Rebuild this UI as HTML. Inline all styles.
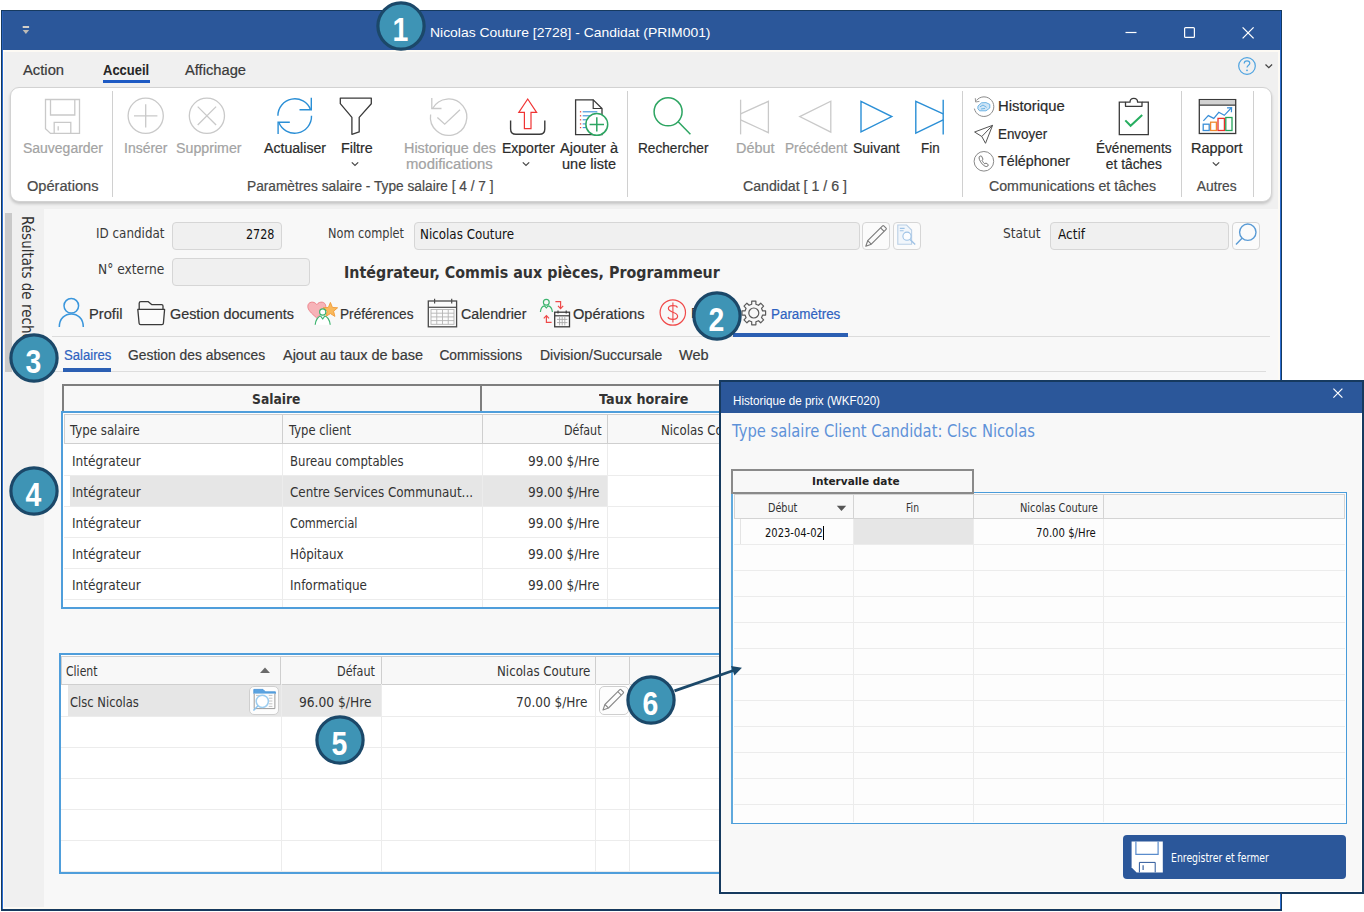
<!DOCTYPE html>
<html lang="fr"><head><meta charset="utf-8"><title>Nicolas Couture [2728] - Candidat (PRIM001)</title>
<style>
html,body{margin:0;padding:0;background:#fff;}
body{width:1364px;height:912px;position:relative;overflow:hidden;font-family:"Liberation Sans",sans-serif;}
.b{position:absolute;display:block;}
.t{position:absolute;white-space:nowrap;line-height:20px;height:20px;transform-origin:0 50%;display:block;}
</style></head>
<body>
<div class="b" style="left:1px;top:10px;width:1281px;height:901px;background:#163a5f;"></div>
<div class="b" style="left:2px;top:11px;width:1279px;height:898px;background:#2a6cd0;"></div>
<div class="b" style="left:3px;top:11px;width:1277px;height:898px;background:#fdfaf4;"></div>
<div class="b" style="left:4px;top:52px;width:1274px;height:855px;background:#f8f8f8;"></div>
<div class="b" style="left:2px;top:10.6px;width:1279px;height:39.699999999999996px;background:#2b579a;"></div>
<div class="b" style="left:2px;top:11px;width:1px;height:39px;background:#2a62bd;"></div>
<div class="b" style="left:1280px;top:11px;width:1px;height:39px;background:#1d5cc0;"></div>
<span class="t" style="left:429.70px;top:22.70px;font-size:13.5px;color:#fff;transform:scaleX(1.0298);">Nicolas Couture [2728] - Candidat (PRIM001)</span>
<svg class="b" style="left:21px;top:24px;" width="10" height="12" viewBox="0 0 10 12" fill="none"><rect x="1.7" y="2" width="6.4" height="2" fill="#d4d0c8"/><path d="M1.7 5.9 L8.1 5.9 L4.9 10 Z" fill="#bfbcb6"/></svg>
<svg class="b" style="left:1120px;top:20px;" width="140" height="24" viewBox="0 0 140 24" fill="none"><path d="M5.5 12.5 H16.5" stroke="#fff" stroke-width="1.2"/><rect x="64.6" y="7.6" width="9.8" height="9.8" rx="1" stroke="#fff" stroke-width="1.2"/><path d="M122.6 7.4 L133.6 18.4 M133.6 7.4 L122.6 18.4" stroke="#fff" stroke-width="1.3"/></svg>
<div class="b" style="left:4px;top:51.6px;width:1274px;height:35.4px;background:#f0f0f0;"></div>
<span class="t" style="left:22.70px;top:60.60px;font-size:13.8px;color:#3a3a3a;transform:scaleX(1.0714);-webkit-text-stroke:0.2px;">Action</span>
<span class="t" style="left:102.60px;top:60.60px;font-size:13.8px;color:#262626;font-weight:700;transform:scaleX(0.9414);">Accueil</span>
<span class="t" style="left:185.00px;top:60.60px;font-size:13.8px;color:#3a3a3a;transform:scaleX(1.0649);-webkit-text-stroke:0.2px;">Affichage</span>
<div class="b" style="left:103px;top:80px;width:47px;height:3px;background:#1e5ac4;"></div>
<svg class="b" style="left:1236px;top:55px;" width="40" height="22" viewBox="0 0 40 22" fill="none"><circle cx="11" cy="11" r="8.3" stroke="#4ea3e0" stroke-width="1.2"/><path d="M8.2 8.6 C8.2 6.6 9.6 5.8 11 5.8 C12.6 5.8 13.8 6.8 13.8 8.2 C13.8 10.2 11 10.2 11 12.6" stroke="#4ea3e0" stroke-width="1.2"/><circle cx="11" cy="15.3" r="0.9" fill="#4ea3e0"/><path d="M29.5 9.5 L32.8 12.6 L36.1 9.5" stroke="#444" stroke-width="1.3"/></svg>
<div class="b" style="left:4px;top:87px;width:1274px;height:122px;background:#f0f0f0;"></div>
<div class="b" style="left:10px;top:87px;width:1262px;height:115px;background:#ffffff;border:1px solid #d2d2d2;box-sizing:border-box;border-radius:9px;box-shadow:0 2px 3px rgba(0,0,0,0.18);"></div>
<div class="b" style="left:112px;top:91px;width:1px;height:106px;background:#d0d0d0;"></div>
<div class="b" style="left:627px;top:91px;width:1px;height:106px;background:#d0d0d0;"></div>
<div class="b" style="left:961.5px;top:91px;width:1.0px;height:106px;background:#d0d0d0;"></div>
<div class="b" style="left:1180.5px;top:91px;width:1.0px;height:106px;background:#d0d0d0;"></div>
<div class="b" style="left:1253px;top:91px;width:1px;height:106px;background:#d0d0d0;"></div>
<span class="t" style="left:23.00px;top:139.10px;font-size:13.8px;color:#a3a3a3;transform:scaleX(1.0125);-webkit-text-stroke:0.2px;">Sauvegarder</span>
<span class="t" style="left:27.00px;top:177.10px;font-size:13.8px;color:#4a4a4a;transform:scaleX(1.0593);-webkit-text-stroke:0.2px;">Opérations</span>
<span class="t" style="left:124.00px;top:139.10px;font-size:13.8px;color:#a3a3a3;transform:scaleX(1.0127);-webkit-text-stroke:0.2px;">Insérer</span>
<span class="t" style="left:175.70px;top:139.10px;font-size:13.8px;color:#a3a3a3;transform:scaleX(1.0305);-webkit-text-stroke:0.2px;">Supprimer</span>
<span class="t" style="left:264.00px;top:139.10px;font-size:13.8px;color:#2b2b2b;transform:scaleX(1.0235);-webkit-text-stroke:0.2px;">Actualiser</span>
<span class="t" style="left:340.60px;top:139.10px;font-size:13.8px;color:#2b2b2b;transform:scaleX(1.0368);-webkit-text-stroke:0.2px;">Filtre</span>
<span class="t" style="left:403.50px;top:139.10px;font-size:13.8px;color:#a3a3a3;transform:scaleX(1.0419);-webkit-text-stroke:0.2px;">Historique des</span>
<span class="t" style="left:405.80px;top:154.90px;font-size:13.8px;color:#a3a3a3;transform:scaleX(1.0766);-webkit-text-stroke:0.2px;">modifications</span>
<span class="t" style="left:501.60px;top:139.10px;font-size:13.8px;color:#2b2b2b;transform:scaleX(1.0143);-webkit-text-stroke:0.2px;">Exporter</span>
<span class="t" style="left:560.00px;top:139.10px;font-size:13.8px;color:#2b2b2b;transform:scaleX(1.0501);-webkit-text-stroke:0.2px;">Ajouter à</span>
<span class="t" style="left:562.00px;top:154.90px;font-size:13.8px;color:#2b2b2b;transform:scaleX(1.0508);-webkit-text-stroke:0.2px;">une liste</span>
<span class="t" style="left:247.00px;top:177.10px;font-size:13.8px;color:#4a4a4a;transform:scaleX(0.9935);-webkit-text-stroke:0.2px;">Paramètres salaire - Type salaire [ 4 / 7 ]</span>
<span class="t" style="left:638.00px;top:139.10px;font-size:13.8px;color:#2b2b2b;transform:scaleX(0.9884);-webkit-text-stroke:0.2px;">Rechercher</span>
<span class="t" style="left:736.00px;top:139.10px;font-size:13.8px;color:#a3a3a3;transform:scaleX(1.0454);-webkit-text-stroke:0.2px;">Début</span>
<span class="t" style="left:784.50px;top:139.10px;font-size:13.8px;color:#a3a3a3;transform:scaleX(0.9904);-webkit-text-stroke:0.2px;">Précédent</span>
<span class="t" style="left:853.00px;top:139.10px;font-size:13.8px;color:#2b2b2b;transform:scaleX(1.0145);-webkit-text-stroke:0.2px;">Suivant</span>
<span class="t" style="left:920.90px;top:139.10px;font-size:13.8px;color:#2b2b2b;transform:scaleX(0.9702);-webkit-text-stroke:0.2px;">Fin</span>
<span class="t" style="left:743.40px;top:177.10px;font-size:13.8px;color:#4a4a4a;transform:scaleX(1.0262);-webkit-text-stroke:0.2px;">Candidat [ 1 / 6 ]</span>
<span class="t" style="left:997.90px;top:96.60px;font-size:13.8px;color:#2b2b2b;transform:scaleX(1.0753);-webkit-text-stroke:0.2px;">Historique</span>
<span class="t" style="left:997.90px;top:124.60px;font-size:13.8px;color:#2b2b2b;transform:scaleX(0.9699);-webkit-text-stroke:0.2px;">Envoyer</span>
<span class="t" style="left:997.90px;top:152.40px;font-size:13.8px;color:#2b2b2b;transform:scaleX(1.0328);-webkit-text-stroke:0.2px;">Téléphoner</span>
<span class="t" style="left:1096.30px;top:139.10px;font-size:13.8px;color:#2b2b2b;transform:scaleX(0.9843);-webkit-text-stroke:0.2px;">Événements</span>
<span class="t" style="left:1105.80px;top:154.90px;font-size:13.8px;color:#2b2b2b;-webkit-text-stroke:0.2px;">et tâches</span>
<span class="t" style="left:988.60px;top:177.10px;font-size:13.8px;color:#4a4a4a;transform:scaleX(1.0272);-webkit-text-stroke:0.2px;">Communications et tâches</span>
<span class="t" style="left:1191.30px;top:139.10px;font-size:13.8px;color:#2b2b2b;transform:scaleX(1.0511);-webkit-text-stroke:0.2px;">Rapport</span>
<span class="t" style="left:1196.80px;top:177.10px;font-size:13.8px;color:#4a4a4a;-webkit-text-stroke:0.2px;">Autres</span>
<svg class="b" style="left:350px;top:160px;" width="10" height="8" viewBox="0 0 10 8" fill="none"><path d="M1.8 2.4 L5 5.4 L8.2 2.4" stroke="#4a4a4a" stroke-width="1.3"/></svg>
<svg class="b" style="left:521px;top:160px;" width="10" height="8" viewBox="0 0 10 8" fill="none"><path d="M1.8 2.4 L5 5.4 L8.2 2.4" stroke="#4a4a4a" stroke-width="1.3"/></svg>
<svg class="b" style="left:1211px;top:160px;" width="10" height="8" viewBox="0 0 10 8" fill="none"><path d="M1.8 2.4 L5 5.4 L8.2 2.4" stroke="#4a4a4a" stroke-width="1.3"/></svg>
<svg class="b" style="left:0;top:90px" width="1280" height="90" viewBox="0 90 1280 90" fill="none"><g stroke="#c9c9c9" stroke-width="1.3"><path d="M45.5 99.5 H79.5 V133.4 H50.5 L45.5 128.6 Z"/><path d="M50.5 99.5 V115 H74.8 V99.5"/><path d="M54.2 133.4 V122.3 H70.8 V133.4"/><path d="M58.2 126.3 V130.6"/></g><g stroke="#c9c9c9" stroke-width="1.3"><circle cx="145.7" cy="115.8" r="17.6"/><path d="M134 115.8 H157.4 M145.7 104.2 V127.6"/><circle cx="206.9" cy="115.8" r="17.6"/><path d="M197.7 106.6 L216.1 125 M216.1 106.6 L197.7 125"/></g><g stroke="#2b8fd6" stroke-width="1.4"><path d="M277.9 115.8 A16.9 16.9 0 0 1 310.6 109.7"/><path d="M311.3 97.7 V109.7 H299.5"/><path d="M311.5 115.8 A16.9 16.9 0 0 1 278.8 122.3"/><path d="M278.1 133.9 V122.3 H289.8"/></g><path d="M340.3 98.1 H371.3 V103.7 L359.2 117.4 V131.9 L351.9 134.3 V117.4 L340.3 103.7 Z" stroke="#3a3a3a" stroke-width="1.3" stroke-linejoin="round"/><g stroke="#c9c9c9" stroke-width="1.3"><path d="M432.6 108.5 A18.2 18.2 0 1 1 430.6 114.5"/><path d="M431.8 98 V108.5 H441.5"/><path d="M437.4 117.4 L444.7 124.2 L460 109.7"/></g><path d="M510.6 120.6 V129 Q510.6 134.3 516 134.3 H539.4 Q544.8 134.3 544.8 129 V120.6" stroke="#3a3a3a" stroke-width="1.4"/><path d="M527.7 99 L536.6 112.3 H531 V128.6 H524.4 V112.3 H518.8 Z" stroke="#f03434" stroke-width="1.2" stroke-linejoin="miter"/><path d="M575.6 99.8 H593.2 L602 108.5 V134.7 H575.6 Z" stroke="#3a3a3a" stroke-width="1.3" fill="#fff"/><path d="M593.2 99.8 V108.5 H602" stroke="#3a3a3a" stroke-width="1.2"/><path d="M582.7 111.8 H597.3" stroke="#3a8fd8" stroke-width="1.1"/><rect x="579.9" y="111.2" width="1.3" height="1.2" fill="#e8403a"/><path d="M582.7 115.8 H597.3" stroke="#3a8fd8" stroke-width="1.1"/><rect x="579.9" y="115.2" width="1.3" height="1.2" fill="#e8403a"/><path d="M582.7 119.8 H597.3" stroke="#3a8fd8" stroke-width="1.1"/><rect x="579.9" y="119.2" width="1.3" height="1.2" fill="#e8403a"/><path d="M582.7 123.9 H597.3" stroke="#3a8fd8" stroke-width="1.1"/><rect x="579.9" y="123.30000000000001" width="1.3" height="1.2" fill="#e8403a"/><path d="M582.7 127.6 H597.3" stroke="#3a8fd8" stroke-width="1.1"/><rect x="579.9" y="127.0" width="1.3" height="1.2" fill="#e8403a"/><circle cx="596.8" cy="124.4" r="10.9" fill="#fff" stroke="#2da562" stroke-width="1.5"/><path d="M589.6 124.4 H604 M596.8 117.2 V131.6" stroke="#2da562" stroke-width="1.5"/><g stroke="#2da562" stroke-width="1.5"><circle cx="668.1" cy="111.8" r="14"/><path d="M678.2 121.8 L690.4 134.3"/></g><g stroke="#c9c9c9" stroke-width="1.3" stroke-linejoin="miter"><path d="M740.6 99.7 V134.4"/><path d="M740.6 113.9 L768.4 101.3 V132.7 L740.6 119.8"/><path d="M799.7 116.6 L830.8 101.2 V132.2 Z"/></g><g stroke="#2b8fd6" stroke-width="1.4" stroke-linejoin="miter"><path d="M861 101.3 L891.8 116.6 L861 131.9 Z"/><path d="M943.2 99.7 V134.4"/><path d="M943.2 113.9 L915.8 101.3 V133.2 L943.2 119.8"/></g><g stroke="#8a8a8a" stroke-width="1"><path d="M976.3 100.6 A9.8 9.8 0 1 1 974.4 108.6"/><path d="M975.3 98.2 L975.6 102 L979.4 101.4" stroke-width="0.9"/></g><path d="M978 106 L981.5 102.8 L986 102.6 L989.8 104.4 L989.8 108 L986 110.8 L979.6 110.8 L977.8 108.6 Z" fill="#cfe5f6" stroke="#62aee2" stroke-width="0.9"/><path d="M980 106.8 L983 105 L986.6 107.4 M981 109 L985 108.4" stroke="#62aee2" stroke-width="0.9"/><path d="M992.6 125.3 L974.6 132 L981.8 136.5 L985.5 143.3 Z M992.6 125.3 L981.8 136.5" stroke="#555" stroke-width="1" stroke-linejoin="round"/><circle cx="983.9" cy="161.3" r="9.8" stroke="#8a8a8a" stroke-width="1"/><path d="M980.2 156 C978.6 156.6 978.6 158.6 980.6 161.8 C982.6 165 985.6 167.4 987.6 166.2 L988.4 164.8 L986 163 L984.8 163.8 C983.8 163.2 982.6 161.6 982 160.2 L983 159.2 L981.6 156.2 Z" stroke="#666" stroke-width="0.9" stroke-linejoin="round"/><path d="M1125.5 102.2 H1119.3 V134.6 H1148.3 V102.2 H1142" stroke="#3a3a3a" stroke-width="1.3"/><path d="M1125.5 106.3 V102.2 H1130 C1130 97 1137.6 97 1137.6 102.2 H1142 V106.3 Z" stroke="#3a3a3a" stroke-width="1.3" stroke-linejoin="round"/><path d="M1125.3 120.4 L1130.6 125.8 L1142.2 115" stroke="#27ae60" stroke-width="2"/><rect x="1199.3" y="99.6" width="36.4" height="33.9" stroke="#3a3a3a" stroke-width="1.3" fill="#fff"/><rect x="1200" y="100.3" width="35" height="4.4" fill="#d2d2d2"/><path d="M1199.3 105.2 H1235.7" stroke="#3a3a3a" stroke-width="1.2"/><rect x="1203.2" y="124.2" width="6" height="6.3" stroke="#3a8fd8" stroke-width="1.3"/><rect x="1210.6" y="122.2" width="5.8" height="8.3" stroke="#f08a30" stroke-width="1.3"/><rect x="1218" y="118.4" width="6.4" height="12.1" stroke="#e8302a" stroke-width="1.3"/><rect x="1225.8" y="117.5" width="6.2" height="13" stroke="#22a35a" stroke-width="1.3"/><path d="M1203.4 120.8 L1208.3 115.6 L1213.8 118.4 L1218.8 112.3 L1224.3 115.3 L1231.2 108" stroke="#3a8fd8" stroke-width="1.2"/><path d="M1227 107.8 L1231.6 107.6 L1231.4 112.2" stroke="#3a8fd8" stroke-width="1.2"/></svg>
<div class="b" style="left:4px;top:209px;width:40px;height:698px;background:#f0f0f0;"></div>
<div class="b" style="left:5px;top:212.5px;width:7px;height:159.5px;background:#c9c9c9;"></div>
<span class="t" style="left:26.5px;top:215.6px;font-size:15.4px;color:#333;font-family:'DejaVu Sans','Liberation Sans',sans-serif;transform-origin:0 0;transform:rotate(90deg) translate(0,-50%) scaleX(0.879);height:20px;line-height:20px;">Résultats de recherche</span>
<div class="b" style="left:4px;top:337px;width:40px;height:570px;background:#f0f0f0;"></div>
<div class="b" style="left:5px;top:337px;width:7px;height:35px;background:#c9c9c9;"></div>
<span class="t" style="left:96.00px;top:223.20px;font-size:14px;color:#3a3a3a;font-family:'DejaVu Sans','Liberation Sans',sans-serif;transform:scaleX(0.8536);">ID candidat</span>
<div class="b" style="left:172px;top:222px;width:110px;height:28px;background:#f0f0f0;border:1px solid #d6d6d6;box-sizing:border-box;border-radius:4px;"></div>
<span class="t" style="left:245.50px;top:224.20px;font-size:14px;color:#111;font-family:'DejaVu Sans','Liberation Sans',sans-serif;transform:scaleX(0.7996);">2728</span>
<span class="t" style="left:97.70px;top:259.40px;font-size:14px;color:#3a3a3a;font-family:'DejaVu Sans','Liberation Sans',sans-serif;transform:scaleX(0.8760);">N° externe</span>
<div class="b" style="left:172px;top:258px;width:138px;height:28px;background:#f0f0f0;border:1px solid #d6d6d6;box-sizing:border-box;border-radius:4px;"></div>
<span class="t" style="left:328.20px;top:223.20px;font-size:14px;color:#3a3a3a;font-family:'DejaVu Sans','Liberation Sans',sans-serif;transform:scaleX(0.8093);">Nom complet</span>
<div class="b" style="left:414px;top:222px;width:446px;height:28px;background:#f0f0f0;border:1px solid #d6d6d6;box-sizing:border-box;border-radius:4px;"></div>
<span class="t" style="left:420.00px;top:224.20px;font-size:14px;color:#111;font-family:'DejaVu Sans','Liberation Sans',sans-serif;transform:scaleX(0.8508);">Nicolas Couture</span>
<div class="b" style="left:862px;top:222px;width:28px;height:28px;background:#fbfbfb;border:1px solid #d6d6d6;box-sizing:border-box;border-radius:4px;"></div>
<div class="b" style="left:893px;top:222px;width:28px;height:28px;background:#fbfbfb;border:1px solid #d6d6d6;box-sizing:border-box;border-radius:4px;"></div>
<span class="t" style="left:1003.00px;top:223.40px;font-size:14px;color:#3a3a3a;font-family:'DejaVu Sans','Liberation Sans',sans-serif;transform:scaleX(0.8759);">Statut</span>
<div class="b" style="left:1050px;top:222px;width:179px;height:28px;background:#f0f0f0;border:1px solid #d6d6d6;box-sizing:border-box;border-radius:4px;"></div>
<span class="t" style="left:1058.00px;top:224.20px;font-size:14px;color:#111;font-family:'DejaVu Sans','Liberation Sans',sans-serif;transform:scaleX(0.8614);">Actif</span>
<div class="b" style="left:1232px;top:222px;width:28px;height:28px;background:#fbfbfb;border:1px solid #d6d6d6;box-sizing:border-box;border-radius:4px;"></div>
<span class="t" style="left:344.00px;top:263.40px;font-size:15px;color:#333;font-family:'DejaVu Sans','Liberation Sans',sans-serif;font-weight:700;transform:scaleX(0.9514);">Intégrateur, Commis aux pièces, Programmeur</span>
<span class="t" style="left:89.20px;top:304.90px;font-size:13.8px;color:#333;transform:scaleX(1.0624);-webkit-text-stroke:0.2px;">Profil</span>
<span class="t" style="left:169.50px;top:304.90px;font-size:13.8px;color:#333;transform:scaleX(1.0423);-webkit-text-stroke:0.2px;">Gestion documents</span>
<span class="t" style="left:340.00px;top:304.90px;font-size:13.8px;color:#333;transform:scaleX(0.9880);-webkit-text-stroke:0.2px;">Préférences</span>
<span class="t" style="left:460.50px;top:304.90px;font-size:13.8px;color:#333;transform:scaleX(1.0290);-webkit-text-stroke:0.2px;">Calendrier</span>
<span class="t" style="left:573.00px;top:304.90px;font-size:13.8px;color:#333;transform:scaleX(1.0593);-webkit-text-stroke:0.2px;">Opérations</span>
<span class="t" style="left:770.50px;top:304.90px;font-size:13.8px;color:#2e62c0;transform:scaleX(0.9718);-webkit-text-stroke:0.2px;">Paramètres</span>
<div class="b" style="left:52px;top:336px;width:1218px;height:1px;background:#dcdcdc;"></div>
<div class="b" style="left:732.5px;top:333px;width:115.10000000000002px;height:3.5px;background:#2b5fb3;"></div>
<span class="t" style="left:63.60px;top:345.60px;font-size:13.8px;color:#2e62c0;transform:scaleX(0.9507);-webkit-text-stroke:0.2px;">Salaires</span>
<span class="t" style="left:128.40px;top:345.60px;font-size:13.8px;color:#3a3a3a;transform:scaleX(1.0042);-webkit-text-stroke:0.2px;">Gestion des absences</span>
<span class="t" style="left:282.50px;top:345.60px;font-size:13.8px;color:#3a3a3a;transform:scaleX(1.0489);-webkit-text-stroke:0.2px;">Ajout au taux de base</span>
<span class="t" style="left:439.40px;top:345.60px;font-size:13.8px;color:#3a3a3a;-webkit-text-stroke:0.2px;">Commissions</span>
<span class="t" style="left:539.70px;top:345.60px;font-size:13.8px;color:#3a3a3a;transform:scaleX(1.0159);-webkit-text-stroke:0.2px;">Division/Succursale</span>
<span class="t" style="left:679.00px;top:345.60px;font-size:13.8px;color:#3a3a3a;transform:scaleX(1.0524);-webkit-text-stroke:0.2px;">Web</span>
<div class="b" style="left:52px;top:370.5px;width:1214px;height:1.5px;background:#dddddd;"></div>
<div class="b" style="left:63px;top:368px;width:48px;height:3.5px;background:#2b5fb3;"></div>
<svg class="b" style="left:50px;top:295px" width="730" height="36" viewBox="50 295 730 36" fill="none"><g stroke="#3a96dc" stroke-width="1.5"><circle cx="71.3" cy="305.8" r="7.3"/><path d="M59.3 327 C59.3 309.5 83.3 309.5 83.3 327"/></g><g stroke="#3a3a3a" stroke-width="1.3" stroke-linejoin="round"><path d="M139.2 309.4 V303.2 Q139.2 301.6 140.8 301.6 H148 L151.6 304.6 H161.6 Q163 304.6 163 306 V309.4"/><path d="M137.8 309.4 H164.6 L163.4 323.2 Q163.3 324.6 161.9 324.6 H140.6 Q139.2 324.6 139.1 323.2 Z" fill="#fbfbfb"/></g><path d="M316.6 317.8 C311 313 307.8 309.8 307.8 306.4 C307.8 301.6 314 300.6 316.8 304.6 C319.6 300.6 325.8 301.6 325.8 306.4 C325.8 309.8 322.4 313 316.6 317.8 Z" fill="#f7b3b8" stroke="#ec8088" stroke-width="0.9"/><path d="M330.4 302.4 L332.4 307.4 L337.6 307.8 L333.6 311.2 L334.9 316.4 L330.4 313.6 L325.9 316.4 L327.2 311.2 L323.2 307.8 L328.4 307.4 Z" fill="#f9b95c" stroke="#f09a36" stroke-width="0.9"/><circle cx="322.7" cy="312" r="3.1" fill="#fff" stroke="#3cb46e" stroke-width="1.2"/><path d="M315.2 324.8 C315.6 319.6 318.4 316.4 320.6 316 L322.7 319 L324.8 316 C327 316.4 329.8 319.6 330.2 324.8" fill="#fff" stroke="#3cb46e" stroke-width="1.2" stroke-linejoin="round"/><rect x="428.3" y="301" width="28.3" height="25.8" fill="#fcfcfc" stroke="#4a4a4a" stroke-width="1.3"/><path d="M428.3 307.3 H456.6" stroke="#4a4a4a" stroke-width="1.2"/><path d="M434.6 298.8 V303.5 M451.7 298.8 V303.5" stroke="#4a4a4a" stroke-width="1.2"/><g stroke="#b4b4b4" stroke-width="0.9"><rect x="431" y="309.5" width="23" height="14.8"/><path d="M431 313.2 H454 M431 316.9 H454 M431 320.6 H454 M436.75 309.5 V324.3 M442.5 309.5 V324.3 M448.25 309.5 V324.3"/></g><circle cx="546.3" cy="302.2" r="2.9" stroke="#3cb46e" stroke-width="1.2"/><path d="M540.4 312 C540.8 307.8 543 306 544.6 305.8 L546.3 308 L548 305.8 C549.6 306 552 307.8 552.4 312" stroke="#3cb46e" stroke-width="1.2" stroke-linejoin="round"/><g stroke="#ee4a4a" stroke-width="1.2"><path d="M555.4 301.6 H560.6 V308"/><path d="M558 305.8 L560.6 308.6 L563.2 305.8"/><path d="M551.6 322.4 H546.4 V316"/><path d="M543.8 318.4 L546.4 315.6 L549 318.4"/></g><rect x="554.7" y="312.2" width="14.8" height="14.6" fill="#fcfcfc" stroke="#3a3a3a" stroke-width="1.3"/><path d="M554.7 315.8 H569.5" stroke="#3a3a3a" stroke-width="1.2"/><path d="M558 310.6 V313.4 M566.2 310.6 V313.4" stroke="#3a3a3a" stroke-width="1.1"/><path d="M557 319.4 H567.4 M557 322.6 H567.4 M559.6 317 V325.4 M562.2 317 V325.4 M564.8 317 V325.4" stroke="#a8a8a8" stroke-width="0.9"/><circle cx="672.8" cy="312.5" r="12.7" stroke="#f04a4a" stroke-width="1.2"/><path d="M677.4 307.6 C676.6 305.2 668.4 304.6 668.4 308.6 C668.4 312.8 677.6 311.6 677.6 316.2 C677.6 320.4 668.8 320 668 317" stroke="#f04a4a" stroke-width="1.2"/><path d="M672.9 302.6 V322.6" stroke="#f04a4a" stroke-width="1.1"/><path d="M765.6 310.9 L765.6 315.1 L762.6 315.1 L761.5 317.7 L763.6 319.9 L760.7 322.8 L758.5 320.7 L755.9 321.8 L755.9 324.8 L751.7 324.8 L751.7 321.8 L749.1 320.7 L746.9 322.8 L744.0 319.9 L746.1 317.7 L745.0 315.1 L742.0 315.1 L742.0 310.9 L745.0 310.9 L746.1 308.3 L744.0 306.1 L746.9 303.2 L749.1 305.3 L751.7 304.2 L751.7 301.2 L755.9 301.2 L755.9 304.2 L758.5 305.3 L760.7 303.2 L763.6 306.1 L761.5 308.3 L762.6 310.9 Z" stroke="#5a5a5a" stroke-width="1.2" stroke-linejoin="round"/><circle cx="753.8" cy="313" r="5" stroke="#5a5a5a" stroke-width="1.2"/></svg>
<span class="t" style="left:690.50px;top:304.20px;font-size:13.8px;color:#333;transform:scaleX(0.9231);">Paie</span>
<div class="b" style="left:62px;top:384px;width:420px;height:29px;background:#f8f8f8;border:2px solid #7e7e7e;box-sizing:border-box;"></div>
<div class="b" style="left:480px;top:384px;width:420px;height:29px;background:#f8f8f8;border:2px solid #7e7e7e;box-sizing:border-box;"></div>
<span class="t" style="left:251.50px;top:389.40px;font-size:14.5px;color:#333;font-family:'DejaVu Sans','Liberation Sans',sans-serif;font-weight:700;transform:scaleX(0.8516);">Salaire</span>
<span class="t" style="left:598.50px;top:389.40px;font-size:14.5px;color:#333;font-family:'DejaVu Sans','Liberation Sans',sans-serif;font-weight:700;transform:scaleX(0.8799);">Taux horaire</span>
<div class="b" style="left:61px;top:411px;width:839px;height:198px;background:#ffffff;border:2px solid #4f9edb;box-sizing:border-box;"></div>
<div class="b" style="left:64px;top:414px;width:219px;height:30px;background:#f8f8f8;border:1px solid #cfcfcf;box-sizing:border-box;"></div>
<div class="b" style="left:282px;top:414px;width:201px;height:30px;background:#f8f8f8;border:1px solid #cfcfcf;box-sizing:border-box;"></div>
<div class="b" style="left:482px;top:414px;width:126px;height:30px;background:#f8f8f8;border:1px solid #cfcfcf;box-sizing:border-box;"></div>
<div class="b" style="left:607px;top:414px;width:193px;height:30px;background:#f8f8f8;border:1px solid #cfcfcf;box-sizing:border-box;"></div>
<span class="t" style="left:69.80px;top:420.00px;font-size:14px;color:#333;font-family:'DejaVu Sans','Liberation Sans',sans-serif;transform:scaleX(0.8407);">Type salaire</span>
<span class="t" style="left:289.00px;top:420.00px;font-size:14px;color:#333;font-family:'DejaVu Sans','Liberation Sans',sans-serif;transform:scaleX(0.8260);">Type client</span>
<span class="t" style="left:563.50px;top:420.00px;font-size:14px;color:#333;font-family:'DejaVu Sans','Liberation Sans',sans-serif;transform:scaleX(0.7934);">Défaut</span>
<span class="t" style="left:661.00px;top:420.00px;font-size:14px;color:#333;font-family:'DejaVu Sans','Liberation Sans',sans-serif;transform:scaleX(0.8417);">Nicolas Couture</span>
<div class="b" style="left:70px;top:475px;width:537px;height:30.600000000000023px;background:#e6e6e6;"></div>
<div class="b" style="left:64px;top:475px;width:836px;height:1px;background:#ececec;"></div>
<div class="b" style="left:64px;top:506px;width:836px;height:1px;background:#ececec;"></div>
<div class="b" style="left:64px;top:537px;width:836px;height:1px;background:#ececec;"></div>
<div class="b" style="left:64px;top:568px;width:836px;height:1px;background:#ececec;"></div>
<div class="b" style="left:64px;top:599px;width:836px;height:1px;background:#ececec;"></div>
<div class="b" style="left:282px;top:444px;width:1px;height:163px;background:#ececec;"></div>
<div class="b" style="left:482px;top:444px;width:1px;height:163px;background:#ececec;"></div>
<div class="b" style="left:607px;top:444px;width:1px;height:163px;background:#ececec;"></div>
<span class="t" style="left:72.20px;top:451.10px;font-size:14px;color:#333;font-family:'DejaVu Sans','Liberation Sans',sans-serif;transform:scaleX(0.8702);">Intégrateur</span>
<span class="t" style="left:289.50px;top:451.10px;font-size:14px;color:#333;font-family:'DejaVu Sans','Liberation Sans',sans-serif;transform:scaleX(0.8347);">Bureau comptables</span>
<span class="t" style="left:527.50px;top:451.10px;font-size:14px;color:#333;font-family:'DejaVu Sans','Liberation Sans',sans-serif;transform:scaleX(0.8640);">99.00 $/Hre</span>
<span class="t" style="left:72.20px;top:482.10px;font-size:14px;color:#333;font-family:'DejaVu Sans','Liberation Sans',sans-serif;transform:scaleX(0.8702);">Intégrateur</span>
<span class="t" style="left:289.50px;top:482.10px;font-size:14px;color:#333;font-family:'DejaVu Sans','Liberation Sans',sans-serif;transform:scaleX(0.8535);">Centre Services Communaut...</span>
<span class="t" style="left:527.50px;top:482.10px;font-size:14px;color:#333;font-family:'DejaVu Sans','Liberation Sans',sans-serif;transform:scaleX(0.8640);">99.00 $/Hre</span>
<span class="t" style="left:72.20px;top:513.10px;font-size:14px;color:#333;font-family:'DejaVu Sans','Liberation Sans',sans-serif;transform:scaleX(0.8702);">Intégrateur</span>
<span class="t" style="left:289.50px;top:513.10px;font-size:14px;color:#333;font-family:'DejaVu Sans','Liberation Sans',sans-serif;transform:scaleX(0.8061);">Commercial</span>
<span class="t" style="left:527.50px;top:513.10px;font-size:14px;color:#333;font-family:'DejaVu Sans','Liberation Sans',sans-serif;transform:scaleX(0.8640);">99.00 $/Hre</span>
<span class="t" style="left:72.20px;top:544.10px;font-size:14px;color:#333;font-family:'DejaVu Sans','Liberation Sans',sans-serif;transform:scaleX(0.8702);">Intégrateur</span>
<span class="t" style="left:289.50px;top:544.10px;font-size:14px;color:#333;font-family:'DejaVu Sans','Liberation Sans',sans-serif;transform:scaleX(0.8477);">Hôpitaux</span>
<span class="t" style="left:527.50px;top:544.10px;font-size:14px;color:#333;font-family:'DejaVu Sans','Liberation Sans',sans-serif;transform:scaleX(0.8640);">99.00 $/Hre</span>
<span class="t" style="left:72.20px;top:575.10px;font-size:14px;color:#333;font-family:'DejaVu Sans','Liberation Sans',sans-serif;transform:scaleX(0.8702);">Intégrateur</span>
<span class="t" style="left:289.50px;top:575.10px;font-size:14px;color:#333;font-family:'DejaVu Sans','Liberation Sans',sans-serif;transform:scaleX(0.8557);">Informatique</span>
<span class="t" style="left:527.50px;top:575.10px;font-size:14px;color:#333;font-family:'DejaVu Sans','Liberation Sans',sans-serif;transform:scaleX(0.8640);">99.00 $/Hre</span>
<div class="b" style="left:59px;top:653px;width:841px;height:221px;background:#ffffff;border:2px solid #4f9edb;box-sizing:border-box;"></div>
<div class="b" style="left:61px;top:656px;width:220px;height:29px;background:#f8f8f8;border:1px solid #cfcfcf;box-sizing:border-box;"></div>
<div class="b" style="left:280px;top:656px;width:101.5px;height:29px;background:#f8f8f8;border:1px solid #cfcfcf;box-sizing:border-box;"></div>
<div class="b" style="left:380.5px;top:656px;width:215.5px;height:29px;background:#f8f8f8;border:1px solid #cfcfcf;box-sizing:border-box;"></div>
<div class="b" style="left:595px;top:656px;width:35px;height:29px;background:#f8f8f8;border:1px solid #cfcfcf;box-sizing:border-box;"></div>
<div class="b" style="left:629px;top:656px;width:271px;height:29px;background:#f8f8f8;border:1px solid #cfcfcf;box-sizing:border-box;"></div>
<span class="t" style="left:66.20px;top:661.10px;font-size:14px;color:#333;font-family:'DejaVu Sans','Liberation Sans',sans-serif;transform:scaleX(0.7772);">Client</span>
<svg class="b" style="left:259px;top:666px;" width="12" height="8" viewBox="0 0 12 8" fill="none"><path d="M1 7 L6 1.5 L11 7 Z" fill="#6a6a6a"/></svg>
<span class="t" style="left:336.50px;top:661.10px;font-size:14px;color:#333;font-family:'DejaVu Sans','Liberation Sans',sans-serif;transform:scaleX(0.8019);">Défaut</span>
<span class="t" style="left:496.50px;top:661.10px;font-size:14px;color:#333;font-family:'DejaVu Sans','Liberation Sans',sans-serif;transform:scaleX(0.8445);">Nicolas Couture</span>
<div class="b" style="left:68px;top:685px;width:313px;height:30.5px;background:#e6e6e6;"></div>
<div class="b" style="left:61px;top:715.5px;width:839px;height:1.0px;background:#ececec;"></div>
<div class="b" style="left:61px;top:746.5px;width:839px;height:1.0px;background:#ececec;"></div>
<div class="b" style="left:61px;top:777.5px;width:839px;height:1.0px;background:#ececec;"></div>
<div class="b" style="left:61px;top:809px;width:839px;height:1px;background:#ececec;"></div>
<div class="b" style="left:61px;top:840px;width:839px;height:1px;background:#ececec;"></div>
<div class="b" style="left:61px;top:870.5px;width:839px;height:1.0px;background:#ececec;"></div>
<div class="b" style="left:280.5px;top:684px;width:1.0px;height:188px;background:#ececec;"></div>
<div class="b" style="left:381px;top:684px;width:1px;height:188px;background:#ececec;"></div>
<div class="b" style="left:595px;top:684px;width:1px;height:188px;background:#ececec;"></div>
<div class="b" style="left:629px;top:684px;width:1px;height:188px;background:#ececec;"></div>
<span class="t" style="left:69.50px;top:691.80px;font-size:14px;color:#333;font-family:'DejaVu Sans','Liberation Sans',sans-serif;transform:scaleX(0.8251);">Clsc Nicolas</span>
<span class="t" style="left:299.20px;top:691.80px;font-size:14px;color:#333;font-family:'DejaVu Sans','Liberation Sans',sans-serif;transform:scaleX(0.8761);">96.00 $/Hre</span>
<span class="t" style="left:515.50px;top:691.80px;font-size:14px;color:#333;font-family:'DejaVu Sans','Liberation Sans',sans-serif;transform:scaleX(0.8640);">70.00 $/Hre</span>
<div class="b" style="left:249px;top:686px;width:30px;height:29px;background:#fdfdfd;border:1px solid #cfcfcf;box-sizing:border-box;border-radius:5px;"></div>
<div class="b" style="left:599px;top:686px;width:30px;height:29px;background:#fdfdfd;border:1px solid #cfcfcf;box-sizing:border-box;border-radius:5px;"></div>
<svg class="b" style="left:590px;top:215px" width="680" height="505" viewBox="590 215 680 505" fill="none"><g transform="translate(599.5,685.8)" stroke="#8a8a8a" stroke-width="1.1" stroke-linejoin="round" fill="none"><path d="M3.5 24.2 L5.4 18.7 L20.3 3.9 Q20.9 3.3 21.5 3.9 L23.8 6.2 Q24.4 6.8 23.8 7.4 L9 22.2 Z"/><path d="M5.4 18.7 L9 22.2 M18.3 5.9 L21.8 9.4"/></g><g transform="translate(862.3,222)" stroke="#7a7a7a" stroke-width="1.1" stroke-linejoin="round" fill="none"><path d="M3.5 24.2 L5.4 18.7 L20.3 3.9 Q20.9 3.3 21.5 3.9 L23.8 6.2 Q24.4 6.8 23.8 7.4 L9 22.2 Z"/><path d="M5.4 18.7 L9 22.2 M18.3 5.9 L21.8 9.4"/></g><g stroke="#b9cfe6" stroke-width="1.1" fill="none"><path d="M897.8 225 H906.6 L911.6 230 V244.2 H897.8 Z" fill="#f1f6fb"/><path d="M899.8 228.4 H904.6 M899.8 230.8 H903.6" stroke="#9fc3e6"/><circle cx="907" cy="236.2" r="4.1" fill="#fbfdff" stroke="#9fc3e6"/><path d="M910 239.4 L915.2 244.4" stroke="#9fc3e6" stroke-width="1.4"/></g><g stroke="#5a9bd5" stroke-width="1.4" fill="none"><circle cx="1247.8" cy="232.2" r="8.2"/><path d="M1242 238.2 L1236 244.4"/></g></svg>
<svg class="b" style="left:249.5px;top:685.8px;" width="29" height="29" viewBox="0 0 29 29" fill="none"><path d="M3.8 7.6 V3.4 H13 L15.4 5.8 H25.4 V7.6 Z" fill="#5ba3e0" stroke="#3f8fd6" stroke-width="0.8" stroke-linejoin="round"/><path d="M4.2 7.6 V22.6 H24.9 V7.6" stroke="#9a9a9a" stroke-width="1" fill="#fdfdfd"/><path d="M18.8 9.4 H22.4 M18.8 12.2 H22.4 M18.8 15 H22.4 M18.8 17.8 H22.4 M18.8 20.4 H22.4 M6 9.4 H15" stroke="#c4c4c4" stroke-width="1"/><circle cx="12.3" cy="15.3" r="6.1" fill="#fff" stroke="#9ccdf0" stroke-width="1.5"/><path d="M8 19.8 L3.4 24.6" stroke="#8cc4ee" stroke-width="1.5"/></svg>
<div class="b" style="left:719px;top:380px;width:645px;height:514px;background:#163a5f;"></div>
<div class="b" style="left:721px;top:382px;width:641px;height:510px;background:#ffffff;"></div>
<div class="b" style="left:721px;top:382px;width:640px;height:508.5px;background:#f8f8f8;"></div>
<div class="b" style="left:721px;top:382px;width:641px;height:31px;background:#2b579a;"></div>
<span class="t" style="left:733.00px;top:390.80px;font-size:12px;color:#fff;transform:scaleX(0.9710);">Historique de prix (WKF020)</span>
<svg class="b" style="left:1331px;top:386px;" width="14" height="14" viewBox="0 0 14 14" fill="none"><path d="M2.4 2.6 L11.4 11.6 M11.4 2.6 L2.4 11.6" stroke="#fff" stroke-width="1.2"/></svg>
<span class="t" style="left:731.60px;top:421.40px;font-size:17.5px;color:#5f92d8;font-family:'DejaVu Sans','Liberation Sans',sans-serif;transform:scaleX(0.8415);">Type salaire Client Candidat: Clsc Nicolas</span>
<div class="b" style="left:731px;top:492px;width:616px;height:332px;background:#fdfdfd;border:1px solid #4a9cda;box-sizing:border-box;border-left:2px solid #5fa9dd;"></div>
<div class="b" style="left:731px;top:469px;width:243px;height:25px;background:#f8f8f8;border:2px solid #8a8a8a;box-sizing:border-box;"></div>
<span class="t" style="left:812.00px;top:472.40px;font-size:11px;color:#222;font-family:'DejaVu Sans','Liberation Sans',sans-serif;font-weight:700;transform:scaleX(0.9572);">Intervalle date</span>
<div class="b" style="left:734px;top:494px;width:120px;height:25px;background:#f8f8f8;border:1px solid #d4d4d4;box-sizing:border-box;"></div>
<div class="b" style="left:853px;top:494px;width:120.5px;height:25px;background:#f8f8f8;border:1px solid #d4d4d4;box-sizing:border-box;"></div>
<div class="b" style="left:972.5px;top:494px;width:131.5px;height:25px;background:#f8f8f8;border:1px solid #d4d4d4;box-sizing:border-box;"></div>
<div class="b" style="left:1103px;top:494px;width:242px;height:25px;background:#f8f8f8;border:1px solid #d4d4d4;box-sizing:border-box;"></div>
<span class="t" style="left:768.00px;top:497.80px;font-size:12px;color:#333;font-family:'DejaVu Sans','Liberation Sans',sans-serif;transform:scaleX(0.8041);">Début</span>
<svg class="b" style="left:836px;top:505px;" width="11" height="7" viewBox="0 0 11 7" fill="none"><path d="M0.8 0.8 L10.2 0.8 L5.5 6 Z" fill="#555"/></svg>
<span class="t" style="left:906.00px;top:497.80px;font-size:12px;color:#333;font-family:'DejaVu Sans','Liberation Sans',sans-serif;transform:scaleX(0.7661);">Fin</span>
<span class="t" style="left:1020.40px;top:497.80px;font-size:12px;color:#333;font-family:'DejaVu Sans','Liberation Sans',sans-serif;transform:scaleX(0.8215);">Nicolas Couture</span>
<div class="b" style="left:854px;top:519px;width:119px;height:25px;background:#e6e6e6;"></div>
<div class="b" style="left:734px;top:544px;width:611px;height:1px;background:#ececec;"></div>
<div class="b" style="left:734px;top:570px;width:611px;height:1px;background:#ececec;"></div>
<div class="b" style="left:734px;top:596px;width:611px;height:1px;background:#ececec;"></div>
<div class="b" style="left:734px;top:622px;width:611px;height:1px;background:#ececec;"></div>
<div class="b" style="left:734px;top:648px;width:611px;height:1px;background:#ececec;"></div>
<div class="b" style="left:734px;top:674px;width:611px;height:1px;background:#ececec;"></div>
<div class="b" style="left:734px;top:700px;width:611px;height:1px;background:#ececec;"></div>
<div class="b" style="left:734px;top:726px;width:611px;height:1px;background:#ececec;"></div>
<div class="b" style="left:734px;top:752px;width:611px;height:1px;background:#ececec;"></div>
<div class="b" style="left:734px;top:778px;width:611px;height:1px;background:#ececec;"></div>
<div class="b" style="left:734px;top:804px;width:611px;height:1px;background:#ececec;"></div>
<div class="b" style="left:853.3px;top:519px;width:1.0px;height:303px;background:#ececec;"></div>
<div class="b" style="left:972.7px;top:519px;width:1.0px;height:303px;background:#ececec;"></div>
<div class="b" style="left:1103px;top:519px;width:1px;height:303px;background:#ececec;"></div>
<div class="b" style="left:739.5px;top:519px;width:1.0px;height:25px;background:#e4e4e4;"></div>
<span class="t" style="left:764.80px;top:523.40px;font-size:12px;color:#111;font-family:'DejaVu Sans','Liberation Sans',sans-serif;transform:scaleX(0.8301);">2023-04-02</span>
<div class="b" style="left:823.3px;top:526px;width:1.0px;height:14px;background:#000;"></div>
<span class="t" style="left:1036.00px;top:523.40px;font-size:12px;color:#111;font-family:'DejaVu Sans','Liberation Sans',sans-serif;transform:scaleX(0.8432);">70.00 $/Hre</span>
<div class="b" style="left:1123px;top:835px;width:223px;height:44px;background:#2b579a;border-radius:4px;"></div>
<span class="t" style="left:1170.60px;top:848.00px;font-size:12px;color:#fff;font-family:'DejaVu Sans','Liberation Sans',sans-serif;transform:scaleX(0.7750);">Enregistrer et fermer</span>
<svg class="b" style="left:1131px;top:841px;" width="33" height="32" viewBox="0 0 33 32" fill="none"><path d="M0.6 0.6 H31.8 V31.4 H5.6 L0.6 26.6 Z" fill="#fff"/><path d="M4.9 0.6 V13.4 H27.1 V0.6" stroke="#5a8ccc" stroke-width="1.2"/><path d="M8.4 31.4 V21.4 H24.2 V31.4" stroke="#2b579a" stroke-width="1"/><path d="M12.1 24.2 V29" stroke="#2b579a" stroke-width="1.1"/></svg>
<svg class="b" style="left:660px;top:650px" width="100" height="60" viewBox="660 650 100 60"><path d="M674.5 690.8 L733.4 670.5" stroke="#1b4869" stroke-width="2.9"/><path d="M741.9 667.7 L731 666 L734.4 675.4 Z" fill="#1b4869"/></svg>
<svg class="b" style="left:374.6px;top:-0.3999999999999986px" width="52" height="52" viewBox="0 0 52 52"><circle cx="26" cy="26" r="23.1" fill="#3e94b5" stroke="#1b4869" stroke-width="3.2"/><text transform="translate(25.3 40.8) scale(0.87 1)" x="0" y="0" text-anchor="middle" font-family="'Liberation Sans',sans-serif" font-weight="700" font-size="32.6" fill="#fff">1</text></svg>
<svg class="b" style="left:691.3px;top:289.6px" width="52" height="52" viewBox="0 0 52 52"><circle cx="26" cy="26" r="23.1" fill="#3e94b5" stroke="#1b4869" stroke-width="3.2"/><text transform="translate(25.3 40.8) scale(0.87 1)" x="0" y="0" text-anchor="middle" font-family="'Liberation Sans',sans-serif" font-weight="700" font-size="32.6" fill="#fff">2</text></svg>
<svg class="b" style="left:8.299999999999997px;top:331.6px" width="52" height="52" viewBox="0 0 52 52"><circle cx="26" cy="26" r="23.1" fill="#3e94b5" stroke="#1b4869" stroke-width="3.2"/><text transform="translate(25.3 40.8) scale(0.87 1)" x="0" y="0" text-anchor="middle" font-family="'Liberation Sans',sans-serif" font-weight="700" font-size="32.6" fill="#fff">3</text></svg>
<svg class="b" style="left:8.299999999999997px;top:465.3px" width="52" height="52" viewBox="0 0 52 52"><circle cx="26" cy="26" r="23.1" fill="#3e94b5" stroke="#1b4869" stroke-width="3.2"/><text transform="translate(25.3 40.8) scale(0.87 1)" x="0" y="0" text-anchor="middle" font-family="'Liberation Sans',sans-serif" font-weight="700" font-size="32.6" fill="#fff">4</text></svg>
<svg class="b" style="left:313.9px;top:713.7px" width="52" height="52" viewBox="0 0 52 52"><circle cx="26" cy="26" r="23.1" fill="#3e94b5" stroke="#1b4869" stroke-width="3.2"/><text transform="translate(25.3 40.8) scale(0.87 1)" x="0" y="0" text-anchor="middle" font-family="'Liberation Sans',sans-serif" font-weight="700" font-size="32.6" fill="#fff">5</text></svg>
<svg class="b" style="left:625.3px;top:673.7px" width="52" height="52" viewBox="0 0 52 52"><circle cx="26" cy="26" r="23.1" fill="#3e94b5" stroke="#1b4869" stroke-width="3.2"/><text transform="translate(25.3 40.8) scale(0.87 1)" x="0" y="0" text-anchor="middle" font-family="'Liberation Sans',sans-serif" font-weight="700" font-size="32.6" fill="#fff">6</text></svg>
</body></html>
